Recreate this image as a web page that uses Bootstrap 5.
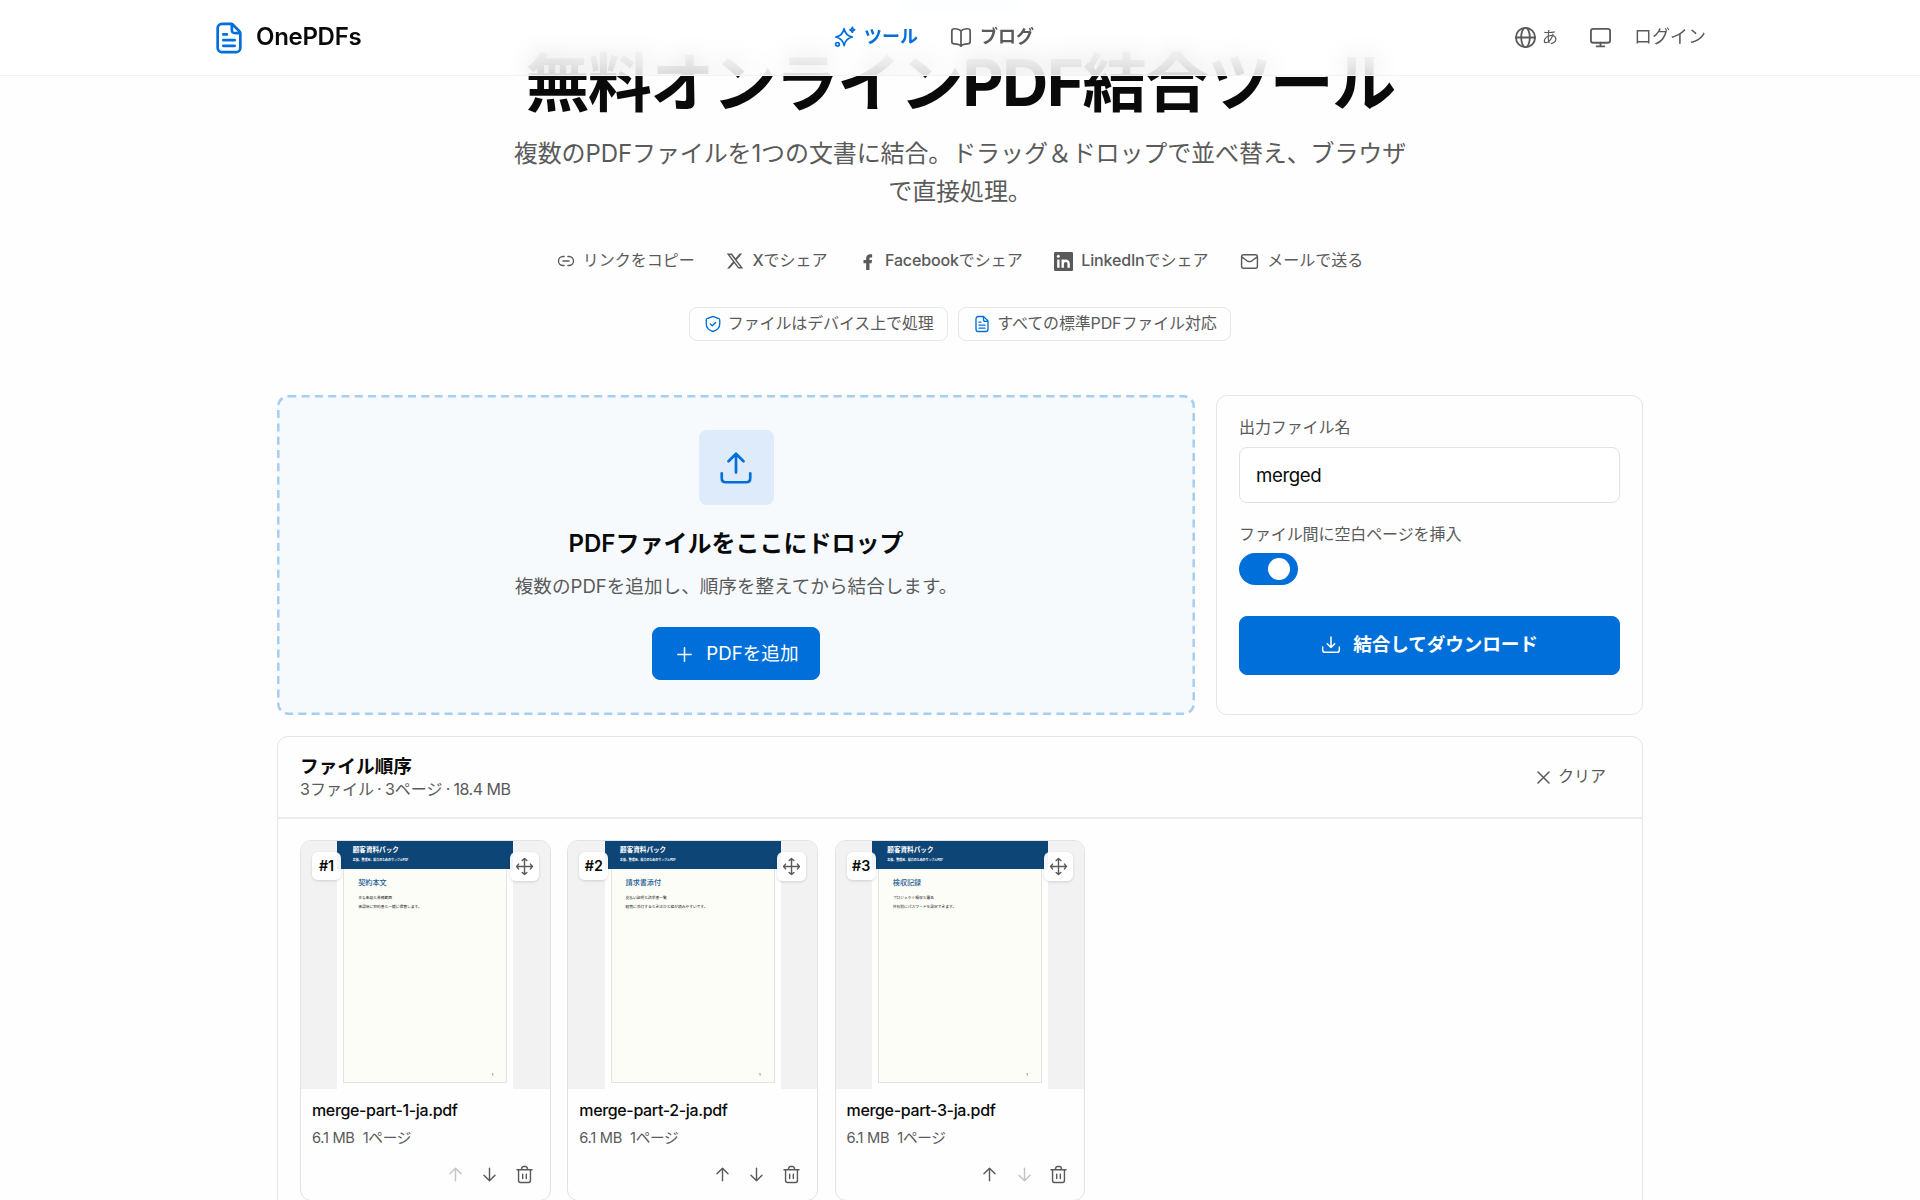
<!DOCTYPE html>
<html lang="ja">
<head>
<meta charset="utf-8">
<meta name="viewport" content="width=device-width, initial-scale=1">
<title>OnePDFs</title>
<link href="https://cdn.jsdelivr.net/npm/bootstrap@5.3.0/dist/css/bootstrap.min.css" rel="stylesheet">
<style>
:root{--brand:#006fd9;--ink:#0a0a0a;--soft:#5a5a5a;--edge:#e6e6e6}
html,body{height:1200px;overflow:hidden}
body{font-family:Inter,"Noto Sans CJK JP",sans-serif;color:var(--ink);background:#fefefe;font-size:16px;line-height:1.35}
svg.ic{fill:none;stroke:currentColor;stroke-width:1.8;stroke-linecap:round;stroke-linejoin:round;flex:none;display:block}
.soft{color:var(--soft)} .brand-c{color:var(--brand)}
.topbar{height:76px;border-bottom:1px solid #f3f3f3;padding:0 214px 0 212px}
.topbar::before{content:"";position:absolute;inset:0;z-index:-2;backdrop-filter:blur(13px);opacity:.84}
.topbar::after{content:"";position:absolute;inset:0;z-index:-1;background:linear-gradient(rgba(255,255,255,.86) 50%,rgba(255,255,255,.8))}
.topbar>div{flex:1 1 0}
.topbar .ic{stroke-width:1.9}
.logo-name{font-size:24px;font-weight:600;letter-spacing:-.3px;margin-left:2px}
.topnav{font-size:18px;font-weight:600;margin-right:50px}
.hero{width:900px;padding-top:41px}
.hero-pill{left:900px;top:-16px;width:120px;height:28px;background:#e6f1fd;border-radius:8px}
.hero h1{font-size:64px;line-height:84px;font-weight:700;letter-spacing:-1.6px;margin:0 -20px 10px}
.hero-sub{font-size:24px;line-height:37.5px;height:75px;margin-bottom:35px;font-weight:400;white-space:nowrap;letter-spacing:-.11px}
.share{height:32px;gap:31.5px;font-size:16px;margin-bottom:30px;white-space:nowrap}
.share b{font-weight:500;letter-spacing:-.15px}
.pill{height:34px;border:1px solid var(--edge);border-radius:8px;padding:0 13.5px 0 14px;font-size:16px;letter-spacing:-.13px;gap:6px;white-space:nowrap}
.work{width:1366px;margin-top:54px}
.drop{width:918px;height:320px;background:#f6fafd;border-radius:11px;padding-top:35px}
.drop-edge{inset:0;width:100%;height:100%;fill:none;stroke:#a7cdf0;stroke-width:2.5;stroke-dasharray:8 5.3}
.tile{width:75px;height:75px;background:#deebfa;border-radius:8px;margin-bottom:22px}
.drop h2{font-size:24px;line-height:34px;font-weight:600;margin-bottom:12px}
.drop p{font-size:18.6px;line-height:26px;margin-bottom:28px}
.btn-brand{--bs-btn-bg:var(--brand);--bs-btn-color:#fff;--bs-btn-border-color:var(--brand);border-radius:8px;font-size:18.67px;line-height:1}
.btn-add{width:168px;height:53px;padding:1px 10px 0 14px}
.side{width:427px;height:320px;border:1px solid var(--edge);border-radius:11px;padding:19px 22px}
.side label{line-height:24px;font-size:16px;letter-spacing:-.1px}
.side .form-control{height:56px;border:1px solid #e2e2e2;border-radius:8px;font-size:18.67px;padding:0 16px;color:var(--ink);background:#fff;letter-spacing:-.4px}
.toggle{width:58.5px;height:32px;border-radius:16px;background:var(--brand);padding-right:8px;margin-top:7px}
.toggle i{width:22px;height:22px;border-radius:50%;background:#fff}
.blank-label{margin-top:19px}
.btn-dl{height:59px;font-weight:600;margin-top:30.5px;letter-spacing:-.15px}
.panel{margin-top:21px;border:1px solid var(--edge);border-radius:11px 11px 0 0;height:480px}
.panel-head{height:82px;border-bottom:2px solid #ebebeb;padding:0 36px 0 22px}
.panel-head h3{font-size:18.67px;line-height:25px;font-weight:600;margin:0}
.counts{word-spacing:-1.3px}
.counts span{letter-spacing:-.5px;word-spacing:0}
.files{padding:21px 22px;gap:16.8px}
.file{width:250.5px;height:361px;border:1px solid #e2e2e2;border-radius:11px;overflow:hidden;flex:none}
.thumb{height:248px;background:#f2f2f2}
.sheet{width:176px;background:#fff;color:#222}
.sheet-top{height:28px;background:#0e4577;color:#fff;padding:4.5px 15px 0 15.5px;position:relative}
.sheet-top b{display:block;font-size:6.6px;line-height:9px}
.sheet-top span{display:block;font-size:2.95px;line-height:10px;font-weight:700;white-space:nowrap}
.sheet-body{width:164px;height:214px;margin-left:6px;border:1px solid #e2e4e0;border-top:0;background:#fcfdf7;padding:7.5px 14px;font-size:3.75px;line-height:9px;position:relative;white-space:nowrap}
.sheet-body b{display:block;font-weight:500;color:#245b94;font-size:7.1px;line-height:12px;margin-bottom:4.5px}
.sheet-body em{right:13px;bottom:3px;font-style:normal}
.num,.grip{top:11px;background:rgba(255,255,255,.95);border-radius:6px;box-shadow:0 1px 3px rgba(0,0,0,.15)}
.num{left:11px;width:29px;height:28px;font-size:14.3px;font-weight:600}
.grip{right:11px;width:29px;height:29px}
.meta{padding:9.5px 11px 0}
.fname{font-size:16px;line-height:22px;font-weight:500;letter-spacing:-.35px}
.fsub{font-size:14.67px;line-height:20px;gap:8px;margin-top:7px;letter-spacing:-.3px}
.acts{gap:15.5px;margin:17px 5px 0 0}
.off{opacity:.35}
</style>
<script src="https://cdn.jsdelivr.net/npm/bootstrap@5.3.0/dist/js/bootstrap.bundle.min.js"></script>
</head>
<body>
<svg class="d-none" xmlns="http://www.w3.org/2000/svg">
<symbol id="doc" viewBox="0 0 24 24"><path d="M8 17.500h8M8 13.500h8M8 9.500h2.500M20 8.500V19a3 3 0 0 1-3 3H7a3 3 0 0 1-3-3V5a3 3 0 0 1 3-3h6.500c.5 0 .8.100 1.100.5L19.500 7.400c.4.300.5.600.5 1.100zM14 2.500V6c0 2 .5 2.500 2.500 2.500h3.300"/></symbol>
<symbol id="spark" viewBox="0 0 24 24"><path d="M2 12c5-1 7.800-3.200 9-9 1.200 5.800 4 8 9 9-5 1-7.800 3.200-9 9.500-1.200-6.300-4-8.500-9-9.500zM20 1.500c.3 1.600 1 2.300 2.500 2.700-1.500.4-2.200 1.100-2.500 2.600-.4-1.500-1.100-2.200-2.500-2.600 1.400-.4 2.100-1.100 2.500-2.700z"/><circle cx="3.800" cy="20" r="2"/></symbol>
<symbol id="book" viewBox="0 0 24 24"><path d="M12 5.500V22M12 5.500C10.500 3.600 8.300 3 5 3 3 3 2 3.400 2 5.500v11.700c0 1.900 1 2.300 3 2.300 3.500 0 5.600.6 7 2.500M12 5.500C13.500 3.600 15.700 3 19 3c2 0 3 .4 3 2.500v11.700c0 1.900-1 2.300-3 2.300-3.500 0-5.600.6-7 2.500"/></symbol>
<symbol id="globe" viewBox="0 0 24 24"><circle cx="12" cy="12" r="10"/><ellipse cx="12" cy="12" rx="4.500" ry="10"/><path d="M2 12h20"/></symbol>
<symbol id="screen" viewBox="0 0 24 24"><rect x="2" y="3" width="20" height="14.500" rx="2.500"/><path d="M12 17.500V21M8 21.200h8"/></symbol>
<symbol id="link" viewBox="0 0 24 24"><path d="M9.500 6H8a6 6 0 0 0 0 12h1.500M14.500 6H16a6 6 0 0 1 0 12h-1.500M8 12h8"/></symbol>
<symbol id="mail" viewBox="0 0 24 24"><rect x="2" y="3.500" width="20" height="17" rx="2.500"/><path d="M2.500 6.500l6.400 4.600c2.500 1.700 3.700 1.700 6.200 0l6.400-4.600"/></symbol>
<symbol id="shield" viewBox="0 0 24 24"><path d="M12 2c-1.500 0-4.500 2.500-7.500 2.600C3.500 4.700 3 5.200 3 7v4.500c0 6 4.500 9 9 10.500 4.500-1.500 9-4.500 9-10.500V7c0-1.800-.5-2.300-1.500-2.400C16.500 4.500 13.500 2 12 2zM8.500 12l2.500 2.300 4.500-4.300"/></symbol>
<symbol id="up" viewBox="0 0 24 24"><path d="M12 15V2.500M7 7.500l5-5 5 5M2.500 15.500v3.300c0 2 .7 2.700 2.700 2.700h13.600c2 0 2.700-.7 2.700-2.700v-3.300"/></symbol>
<symbol id="down" viewBox="0 0 24 24"><path d="M12 2.500V15M7.500 10.500L12 15l4.500-4.500M2 14.500V18c0 2 .7 2.800 2.800 2.800h14.400c2.100 0 2.800-.8 2.800-2.800v-3.500"/></symbol>
<symbol id="move" viewBox="0 0 24 24"><path d="M12 2v20M2 12h20M9 4.500L12 2l3 2.500M9 19.500l3 2.500 3-2.500M4.500 9L2 12l2.500 3M19.500 9l2.500 3-2.500 3"/></symbol>
<symbol id="aup" viewBox="0 0 24 24"><path d="M12 20V4M5 11l7-7 7 7"/></symbol>
<symbol id="adn" viewBox="0 0 24 24"><path d="M12 4v16M5 13l7 7 7-7"/></symbol>
<symbol id="bin" viewBox="0 0 24 24"><path d="M4.500 6v13.500c0 1.800.7 2.500 2.500 2.500h10c1.800 0 2.500-.7 2.500-2.500V6M2.500 6h19M8 5.500c.5-2 1-3.500 2.500-3.500h3c1.500 0 2 1.500 2.500 3.500M9.700 11.500v5.500M14.300 11.500v5.500"/></symbol>
</svg>

<header class="topbar fixed-top d-flex align-items-center">
  <div class="d-flex align-items-center gap-2">
    <svg class="ic brand-c" width="34" height="34"><use href="#doc"/></svg><span class="logo-name">OnePDFs</span>
  </div>
  <nav class="topnav d-flex align-items-center">
    <svg class="ic brand-c" width="22" height="22"><use href="#spark"/></svg><span class="brand-c ms-2">ツール</span>
    <svg class="ic soft" style="margin-left:32px" width="22" height="22"><use href="#book"/></svg><span class="soft ms-2">ブログ</span>
  </nav>
  <div class="d-flex align-items-center justify-content-end soft">
    <svg class="ic" width="23" height="23"><use href="#globe"/></svg><span style="font-size:16px;margin-left:5px">あ</span>
    <svg class="ic" style="margin:0 22px 0 31px" width="23" height="23"><use href="#screen"/></svg><span style="font-size:18px">ログイン</span>
  </div>
</header>

<main>
  <div class="hero-pill position-absolute"></div>
  <section class="hero mx-auto text-center">
    <h1>無料オンラインPDF結合ツール</h1>
    <p class="hero-sub soft">複数のPDFファイルを1つの文書に結合。ドラッグ＆ドロップで並べ替え、ブラウザ<br>で直接処理。</p>
    <div class="share soft d-flex align-items-center justify-content-center">
      <span class="d-flex align-items-center gap-2"><svg class="ic" width="18" height="18"><use href="#link"/></svg>リンクをコピー</span>
      <span class="d-flex align-items-center"><svg class="me-2" width="18" height="18" viewBox="0 0 24 24" fill="currentColor"><path d="M18.200 2h3.400l-7.400 8.500L23 22h-6.800l-5.300-7-6.100 7H1.400l7.900-9.100L1 2h7l4.800 6.400zM17 20h1.900L6.900 3.900h-2z"/></svg><b>X</b>でシェア</span>
      <span class="d-flex align-items-center"><svg class="me-2" width="18" height="18" viewBox="0 0 24 24" fill="currentColor"><path d="M9.500 24v-9H6v-4.500h3.500V9c0-4 2-6 5.700-6 .9 0 1.900.1 2.300.2v4h-1.600c-1.400 0-1.900.7-1.900 1.900v1.400h3.400l-.6 4.500H14v9z"/></svg><b>Facebook</b>でシェア</span>
      <span class="d-flex align-items-center"><svg class="me-2" width="19" height="19" viewBox="0 0 24 24"><rect width="24" height="24" rx="1.500" fill="currentColor"/><g fill="none" stroke="#fff" stroke-width="3"><path d="M5.500 9.500V20M11 20V9.500M11 15c0-5 7.500-5.500 7.500 0v5"/></g><circle cx="5.500" cy="5.500" r="1.900" fill="#fff"/></svg><b>LinkedIn</b>でシェア</span>
      <span class="d-flex align-items-center gap-2"><svg class="ic" width="19" height="19"><use href="#mail"/></svg>メールで送る</span>
    </div>
    <div class="d-flex justify-content-center soft" style="gap:10px">
      <span class="pill d-flex align-items-center"><svg class="ic brand-c" width="18" height="18"><use href="#shield"/></svg>ファイルはデバイス上で処理</span>
      <span class="pill d-flex align-items-center"><svg class="ic brand-c" width="18" height="18"><use href="#doc"/></svg>すべての標準PDFファイル対応</span>
    </div>
  </section>

  <section class="work mx-auto">
    <div class="d-flex justify-content-between">
      <div class="drop position-relative d-flex flex-column align-items-center">
        <svg class="drop-edge position-absolute"><rect x="1.300" y="1.300" width="915.400" height="317.400" rx="10"/></svg>
        <div class="tile d-flex align-items-center justify-content-center brand-c"><svg class="ic" width="36" height="36"><use href="#up"/></svg></div>
        <h2>PDFファイルをここにドロップ</h2>
        <p class="soft">複数のPDFを追加し、順序を整えてから結合します。</p>
        <button class="btn btn-brand btn-add d-flex align-items-center justify-content-center"><svg class="ic" style="margin-right:14px" width="15" height="15" viewBox="0 0 15 15"><path stroke-width="1.500" d="M7.500 .8v13.400M.8 7.500h13.400"/></svg>PDFを追加</button>
      </div>
      <aside class="side">
        <label class="soft d-block mb-2">出力ファイル名</label>
        <input class="form-control shadow-none" value="merged">
        <label class="soft d-block blank-label">ファイル間に空白ページを挿入</label>
        <div class="toggle d-flex align-items-center justify-content-end"><i></i></div>
        <button class="btn btn-brand btn-dl w-100 d-flex align-items-center justify-content-center"><svg class="ic me-2" width="20" height="20"><use href="#down"/></svg><span class="ms-1">結合してダウンロード</span></button>
      </aside>
    </div>
    <div class="panel">
      <div class="panel-head d-flex align-items-center justify-content-between">
        <div><h3>ファイル順序</h3><div class="soft counts">3ファイル · 3ページ · <span>18.4 MB</span></div></div>
        <div class="soft d-flex align-items-center gap-2"><svg class="ic" width="13" height="13" viewBox="0 0 13 13"><path stroke-width="1.500" d="M1 1l11 11M12 1L1 12"/></svg>クリア</div>
      </div>
      <div class="files d-flex">
        <article class="file">
          <div class="thumb position-relative d-flex justify-content-center">
            <div class="sheet"><div class="sheet-top"><b>顧客資料パック</b><span>変換、整理用、結合のためのサンプルPDF</span></div>
              <div class="sheet-body"><b>契約本文</b>主な条項と業務範囲<br>承認後に契約書と一緒に保管します。<em class="position-absolute">1</em></div></div>
            <span class="num position-absolute d-flex align-items-center justify-content-center">#1</span>
            <span class="grip position-absolute d-flex align-items-center justify-content-center soft"><svg class="ic" width="19" height="19"><use href="#move"/></svg></span>
          </div>
          <div class="meta"><div class="fname">merge-part-1-ja.pdf</div><div class="fsub soft d-flex"><span>6.1 MB</span><span>1ページ</span></div>
            <div class="acts soft d-flex justify-content-end"><svg class="ic off" width="19" height="19"><use href="#aup"/></svg><svg class="ic" width="19" height="19"><use href="#adn"/></svg><svg class="ic" width="19" height="19"><use href="#bin"/></svg></div></div>
        </article>
        <article class="file">
          <div class="thumb position-relative d-flex justify-content-center">
            <div class="sheet"><div class="sheet-top"><b>顧客資料パック</b><span>変換、整理用、結合のためのサンプルPDF</span></div>
              <div class="sheet-body"><b>請求書添付</b>支払い証明と請求書一覧<br>経費に添付するときはひと組が読みやすいです。<em class="position-absolute">1</em></div></div>
            <span class="num position-absolute d-flex align-items-center justify-content-center">#2</span>
            <span class="grip position-absolute d-flex align-items-center justify-content-center soft"><svg class="ic" width="19" height="19"><use href="#move"/></svg></span>
          </div>
          <div class="meta"><div class="fname">merge-part-2-ja.pdf</div><div class="fsub soft d-flex"><span>6.1 MB</span><span>1ページ</span></div>
            <div class="acts soft d-flex justify-content-end"><svg class="ic" width="19" height="19"><use href="#aup"/></svg><svg class="ic" width="19" height="19"><use href="#adn"/></svg><svg class="ic" width="19" height="19"><use href="#bin"/></svg></div></div>
        </article>
        <article class="file">
          <div class="thumb position-relative d-flex justify-content-center">
            <div class="sheet"><div class="sheet-top"><b>顧客資料パック</b><span>変換、整理用、結合のためのサンプルPDF</span></div>
              <div class="sheet-body"><b>検収記録</b>プロジェクト検収と署名<br>共有前にパスワードを設定できます。<em class="position-absolute">1</em></div></div>
            <span class="num position-absolute d-flex align-items-center justify-content-center">#3</span>
            <span class="grip position-absolute d-flex align-items-center justify-content-center soft"><svg class="ic" width="19" height="19"><use href="#move"/></svg></span>
          </div>
          <div class="meta"><div class="fname">merge-part-3-ja.pdf</div><div class="fsub soft d-flex"><span>6.1 MB</span><span>1ページ</span></div>
            <div class="acts soft d-flex justify-content-end"><svg class="ic" width="19" height="19"><use href="#aup"/></svg><svg class="ic off" width="19" height="19"><use href="#adn"/></svg><svg class="ic" width="19" height="19"><use href="#bin"/></svg></div></div>
        </article>
      </div>
    </div>
  </section>
</main>
</body>
</html>
